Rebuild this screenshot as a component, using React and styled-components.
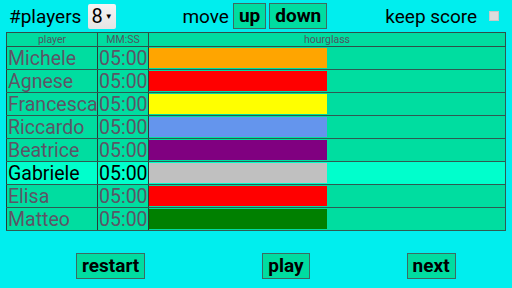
import React from 'react'
import styled, { createGlobalStyle } from 'styled-components'

const GlobalStyle = createGlobalStyle`
  body {
    margin: 0;
    background: #00eeee;
    font-family: Roboto, "Liberation Sans", sans-serif;
  }
`

const Page = styled.div`
  width: 512px;
  height: 288px;
  background: #00eeee;
  display: flex;
  flex-direction: column;
  overflow: hidden;
`

const TopBar = styled.div`
  height: 32px;
  display: flex;
  align-items: center;
  padding: 0 0 0 9px;
  font-size: 19px;
  color: #000;
`

const Group = styled.div`
  display: flex;
  align-items: center;
  gap: ${props => props.$gap || 0}px;
  margin-left: ${props => props.$offset || 0}px;
`

const Label = styled.span`
  margin-right: ${props => props.$space || 0}px;
`

const Select = styled.div`
  width: 28px;
  height: 25px;
  box-sizing: border-box;
  background: linear-gradient(#f4f4f4, #e4e4e4);
  border-radius: 2px;
  display: flex;
  align-items: center;
  padding-left: 3px;
  font-size: 20px;
  gap: 2px;

  & > small {
    font-size: 8px;
  }
`

const Button = styled.button`
  background: #00dda0;
  border: 1px solid #3d6a62;
  height: 26px;
  padding: 0 5px;
  margin-left: ${props => props.$offset || 0}px;
  font-family: Roboto, "Liberation Sans", sans-serif;
  font-weight: bold;
  font-size: 19px;
  color: #000;
  line-height: 22px;
`

const Check = styled.span`
  width: 10px;
  height: 10px;
  background: #dcdcdc;
  border: 1px solid #c8c8c8;
  box-sizing: border-box;
  display: inline-block;
`

const Table = styled.table`
  margin: 0 6px;
  width: 500px;
  border-collapse: collapse;
  table-layout: fixed;
  border: 1px solid #333;
`

const HeadCell = styled.th`
  height: 13px;
  padding: 0;
  font-size: 10.5px;
  font-weight: normal;
  color: #4f5560;
  background: #00dda0;
  border: 1px solid #2f4f48;
  line-height: 12px;
`

const Row = styled.tr`
  height: 23px;
  background: ${props => (props.$active ? '#00ffcc' : '#00dda0')};
  color: ${props => (props.$active ? '#000' : '#5c5566')};
`

const Cell = styled.td`
  padding: 0 1px;
  font-size: 19.5px;
  line-height: 21px;
  white-space: nowrap;
  overflow: hidden;
  border-top: 1px solid #2f5a52;
  border-bottom: 1px solid #2f5a52;
  border-left: 1px solid #2a3a36;
  border-right: 1px solid #2a3a36;
`

const BarCell = styled.td`
  padding: 1px 0 1px 0;
  border: 1px solid #2f5a52;
`

const Bar = styled.div`
  height: 20px;
  background: ${props => props.$color};
`

const BottomBar = styled.div`
  flex: 1;
  display: flex;
  align-items: flex-start;
  padding-left: 76px;
  padding-top: 22px;
`

const players = [
  { name: 'Michele', color: '#ffa500' },
  { name: 'Agnese', color: '#ff0000' },
  { name: 'Francesca', color: '#ffff00' },
  { name: 'Riccardo', color: '#6495ed' },
  { name: 'Beatrice', color: '#800080' },
  { name: 'Gabriele', color: '#c0c0c0', active: true },
  { name: 'Elisa', color: '#ff0000' },
  { name: 'Matteo', color: '#008000' },
]

const App = () => (
  <Page>
    <GlobalStyle />
    <TopBar>
      <Group $gap={7}>
        <span>#players</span>
        <Select>
          8<small>▼</small>
        </Select>
      </Group>
      <Group $gap={3} $offset={66}>
        <Label $space={1}>move</Label>
        <Button>up</Button>
        <Button>down</Button>
      </Group>
      <Group $gap={12} $offset={58}>
        <span>keep score</span>
        <Check />
      </Group>
    </TopBar>
    <Table>
      <colgroup>
        <col style={{ width: 91 }} />
        <col style={{ width: 51 }} />
        <col />
      </colgroup>
      <thead>
        <tr>
          <HeadCell>player</HeadCell>
          <HeadCell>MM:SS</HeadCell>
          <HeadCell>hourglass</HeadCell>
        </tr>
      </thead>
      <tbody>
        {players.map(p => (
          <Row key={p.name} $active={p.active}>
            <Cell>{p.name}</Cell>
            <Cell>05:00</Cell>
            <BarCell>
              <Bar $color={p.color} style={{ width: '50%' }} />
            </BarCell>
          </Row>
        ))}
      </tbody>
    </Table>
    <BottomBar>
      <Button>restart</Button>
      <Button $offset={117}>play</Button>
      <Button $offset={97}>next</Button>
    </BottomBar>
  </Page>
)

export default App
